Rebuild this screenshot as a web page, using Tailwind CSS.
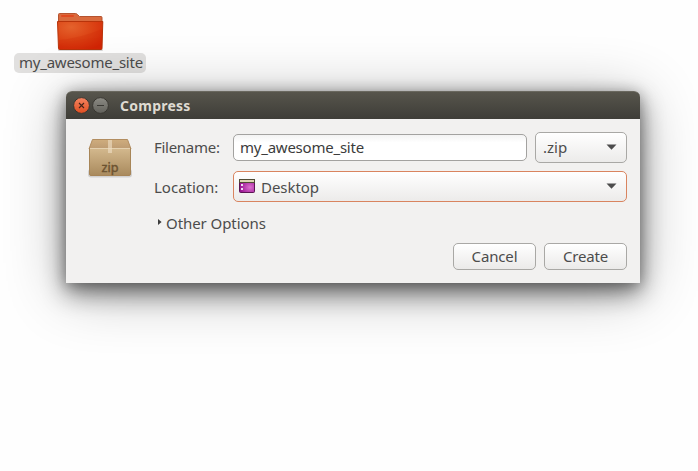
<!DOCTYPE html>
<html lang="en">
<head>
<meta charset="utf-8">
<title>Compress</title>
<script src="https://cdn.jsdelivr.net/npm/@tailwindcss/browser@4"></script>
</head>
<body class="relative h-[471px] w-[698px] overflow-hidden bg-[#fefefe] font-['Noto_Sans','Open_Sans',sans-serif] text-[15px] leading-5 text-[#4c4c4c]">
  <!-- desktop folder -->
  <div class="absolute left-[14px] top-[8px] flex w-[132px] flex-col items-center">
    <svg class="h-[45px] w-[50px]" viewBox="0 0 50 45">
      <defs>
        <radialGradient id="front" cx=".3" cy=".2" r=".9"><stop offset="0" stop-color="#e4622c"/><stop offset=".5" stop-color="#dc4516"/><stop offset="1" stop-color="#d32606"/></radialGradient>
      </defs>
      <rect x="3" y="41" width="45" height="2" rx="1" fill="#000" opacity=".15"/>
      <path d="M3.500 16V6.500q0-1 1-1H20.500q1 0 2 1l2 2H46q1 0 1 1V16z" fill="#d96a3d" stroke="#b5532f"/>
      <rect x="6" y="7" width="13" height="2" rx="1" fill="#e04a20"/>
      <path d="M2.500 13.500H47.800L47 40.500q0 1-1 1H4.500q-1 0-1-1z" fill="url(#front)" stroke="#b8330a"/>
      <path d="M4 32Q26 30 47 21V40.500H4z" fill="#c82000" opacity=".16"/>
    </svg>
    <div class="h-5 w-full whitespace-nowrap rounded-[5px] bg-[#e1e0df] pl-[5px] leading-[19px] tracking-[-0.23px]">my_awesome_site</div>
  </div>

  <!-- dialog -->
  <main class="absolute left-[66px] top-[91px] flex h-[192px] w-[574px] flex-col rounded-t-[6px] bg-[#f2f1f0] shadow-[0_10px_24px_0px_rgba(0,0,0,0.48),0_8px_60px_0px_rgba(0,0,0,0.3),0_2px_14px_0px_rgba(0,0,0,0.28)]">
    <header class="flex h-7 shrink-0 items-center rounded-t-[6px] border-t border-[#6a685f] bg-linear-to-b from-[#57554c] to-[#3e3d38] pl-[7px]">
      <svg class="h-[18px] w-[36px]" viewBox="0 0 36 18">
        <defs>
          <linearGradient id="close" x2="0" y2="1"><stop stop-color="#f58562"/><stop offset="1" stop-color="#e04d20"/></linearGradient>
          <linearGradient id="mini" x2="0" y2="1"><stop stop-color="#8c8b84"/><stop offset="1" stop-color="#62615b"/></linearGradient>
        </defs>
        <circle cx="8.500" cy="8.500" r="7.900" fill="url(#close)" stroke="#393731"/>
        <path d="M6 6l5 5M11 6l-5 5" stroke="#43241a" stroke-width="1.100"/>
        <circle cx="27.500" cy="8.500" r="7.900" fill="url(#mini)" stroke="#393731"/>
        <path d="M24 8.500h7" stroke="#3a3934" stroke-width="1"/>
      </svg>
      <h1 class="ml-[11px] text-[14px] font-bold tracking-[0.25px] text-[#dfdbd2]">Compress</h1>
    </header>
    <div class="flex flex-1 pl-[21px] pr-[13px] pt-[13px]">
      <svg class="mt-[5px] h-[44px] w-[46px] shrink-0" viewBox="0 0 46 44">
        <defs>
          <linearGradient id="box" x2="0" y2="1"><stop stop-color="#d3b88d"/><stop offset="1" stop-color="#a98a5d"/></linearGradient>
          <linearGradient id="lid" x2="0" y2="1"><stop stop-color="#cfad7e"/><stop offset="1" stop-color="#bd9b72"/></linearGradient>
        </defs>
        <rect x="1" y="32" width="44" height="8.500" rx="3" fill="#000" opacity=".13"/>
        <path d="M5.500 2.500H40.500L44 12H2z" fill="url(#lid)" stroke="#b28d60"/>
        <path d="M2.500 11.500H43.500V37q0 1.500-1.500 1.500H4q-1.500 0-1.500-1.500z" fill="url(#box)" stroke="#a78557"/>
        <path d="M3 11.500H43" stroke="#e4d0af"/>
        <path d="M21 3h4v13h-4z" fill="#ecdcc2" opacity=".65"/>
        <text x="14.500" y="34.500" textLength="17" lengthAdjust="spacingAndGlyphs" font-family="Noto Sans" font-size="12" font-weight="400" fill="#6c5331" stroke="#6c5331" stroke-width=".4">zip</text>
      </svg>
      <div class="ml-[21px] flex flex-1 flex-col">
        <div class="flex h-[31px] items-center">
          <span class="w-[79px] shrink-0 pb-0.5 tracking-[-0.28px]">Filename:</span>
          <div class="flex h-[27px] w-[294px] items-center rounded-[5px] border border-[#a3a2a0] bg-linear-to-b from-[#f3f3f3] via-white via-30% to-white pb-[2px] pl-[6px] tracking-[-0.23px] text-[#3c3c3c]">my_awesome_site</div>
          <div class="ml-2 flex h-[31px] flex-1 items-center justify-between rounded-[5px] border border-[#a9a8a5] bg-linear-to-b from-white to-[#ecebea] pl-[7px] pr-[9px]"><span class="pb-0.5">.zip</span>
            <svg class="mb-px h-[6px] w-[11px]" viewBox="0 0 11 6"><path d="M.5.5h10L5.500 5.700z" fill="#4c4c4c"/></svg>
          </div>
        </div>
        <div class="mt-2 flex h-[31px] items-center">
          <span class="w-[79px] shrink-0">Location:</span>
          <div class="flex h-[31px] flex-1 items-center rounded-[5px] border border-[#d9845f] bg-linear-to-b from-white to-[#ecebea] pl-[5px] pr-[9px]">
            <svg class="mb-px mr-[6px] h-[14px] w-[16px]" viewBox="0 0 16 14">
              <defs><radialGradient id="desk" cx=".7" cy=".6" r=".7"><stop stop-color="#dd70cf"/><stop offset="1" stop-color="#971291"/></radialGradient></defs>
              <rect x=".5" y=".5" width="15" height="13" rx="1" fill="url(#desk)" stroke="#5b1653"/>
              <path d="M0 0h16v4H0z" fill="#504b35"/><path d="M1 1h14v2H1z" fill="#ddd8b5"/>
              <path d="M2 5h2v2H2zM2 9h2v2H2z" fill="#eedcf0"/>
            </svg>
            <span class="flex-1 tracking-[-0.05px]">Desktop</span>
            <svg class="mb-px h-[6px] w-[11px]" viewBox="0 0 11 6"><path d="M.5.5h10L5.500 5.700z" fill="#4c4c4c"/></svg>
          </div>
        </div>
        <div class="mt-[11px] flex h-5 items-center pl-[4px]">
          <svg class="mb-[3px] mr-[4px] h-[6px] w-[4px]" viewBox="0 0 4 6"><path d="M0 0l3.600 3L0 6z" fill="#3c3c3c"/></svg>
          <span class="tracking-[-0.07px]">Other Options</span>
        </div>
        <div class="mt-[10px] flex justify-end gap-2">
          <button class="h-[27px] w-[83px] rounded-[5px] border border-[#a9a8a5] bg-linear-to-b from-white to-[#ebeae9] pb-[2px] tracking-[-0.15px]">Cancel</button>
          <button class="h-[27px] w-[83px] rounded-[5px] border border-[#a9a8a5] bg-linear-to-b from-white to-[#ebeae9] pb-[2px] tracking-[-0.15px]">Create</button>
        </div>
      </div>
    </div>
  </main>
</body>
</html>
